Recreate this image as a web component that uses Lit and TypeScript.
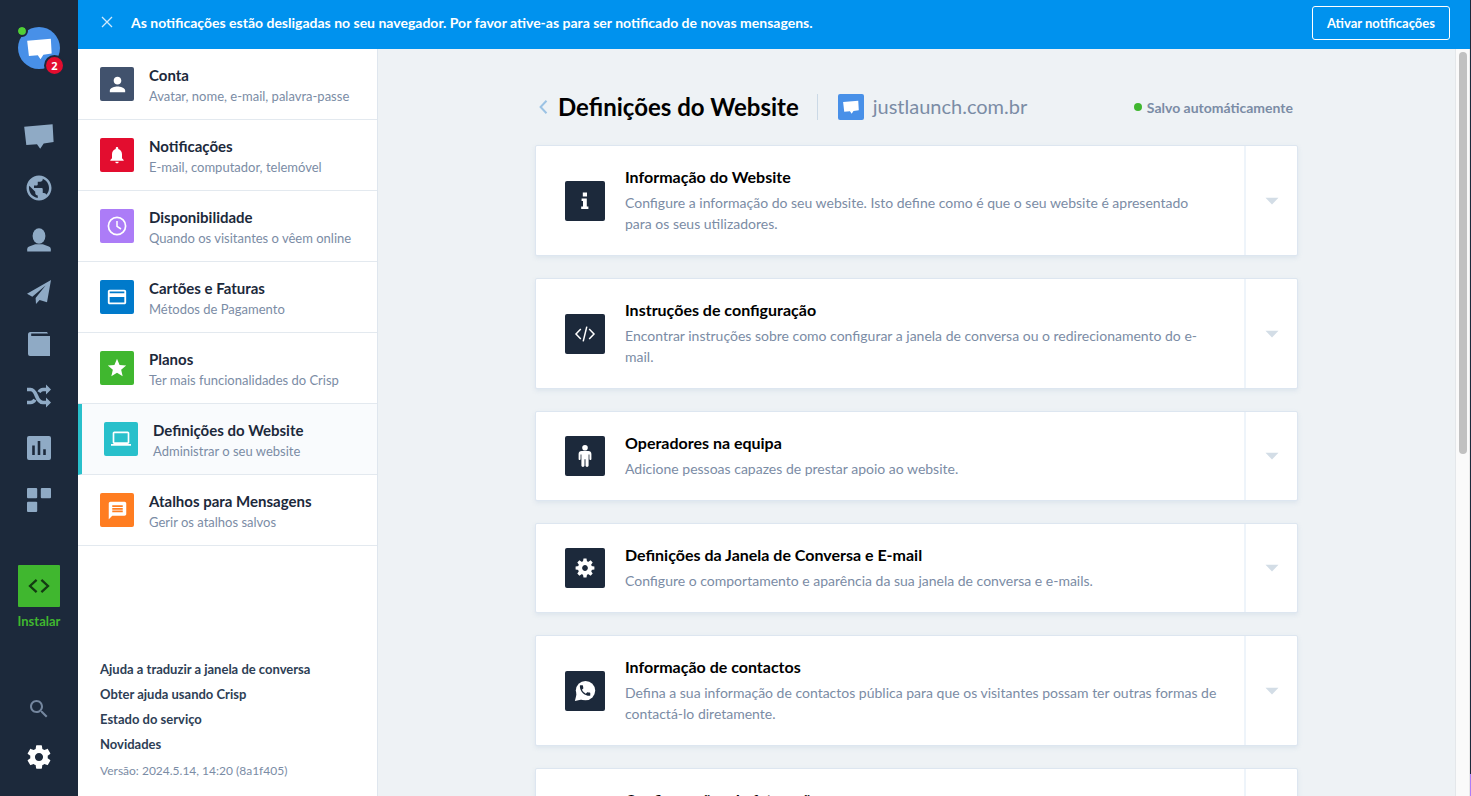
import { LitElement, html, css, svg } from "lit";
import { customElement } from "lit/decorators.js";
import { classMap } from "lit/directives/class-map.js";

const GEAR =
  "M19.43 12.98c.04-.32.07-.64.07-.98s-.03-.66-.07-.98l2.11-1.65c.19-.15.24-.42.12-.64l-2-3.46c-.12-.22-.39-.3-.61-.22l-2.49 1c-.52-.4-1.08-.73-1.69-.98l-.38-2.65C14.46 2.18 14.25 2 14 2h-4c-.25 0-.46.18-.49.42l-.38 2.65c-.61.25-1.17.59-1.69.98l-2.49-1c-.23-.09-.49 0-.61.22l-2 3.46c-.13.22-.07.49.12.64l2.11 1.65c-.04.32-.07.65-.07.98s.03.66.07.98l-2.11 1.65c-.19.15-.24.42-.12.64l2 3.46c.12.22.39.3.61.22l2.49-1c.52.4 1.08.73 1.69.98l.38 2.65c.03.24.24.42.49.42h4c.25 0 .46-.18.49-.42l.38-2.65c.61-.25 1.17-.59 1.69-.98l2.49 1c.23.09.49 0 .61-.22l2-3.46c.12-.22.07-.49-.12-.64l-2.11-1.65zM12 15.5c-1.93 0-3.5-1.57-3.5-3.5s1.57-3.5 3.5-3.5 3.5 1.57 3.5 3.5-1.57 3.5-3.5 3.5z";
const GLOBE =
  "M12 2C6.48 2 2 6.48 2 12s4.48 10 10 10 10-4.48 10-10S17.52 2 12 2zm-1 17.93c-3.95-.49-7-3.85-7-7.93 0-.62.08-1.21.21-1.79L9 15v1c0 1.1.9 2 2 2v1.93zm6.9-2.54c-.26-.81-1-1.39-1.9-1.39h-1v-3c0-.55-.45-1-1-1H8v-2h2c.55 0 1-.45 1-1V7h2c1.1 0 2-.9 2-2v-.41c2.93 1.19 5 4.06 5 7.41 0 2.08-.8 3.97-2.1 5.39z";
const PHONE =
  "M6.62 10.79c1.44 2.83 3.76 5.14 6.59 6.59l2.2-2.2c.27-.27.67-.36 1.02-.24 1.12.37 2.33.57 3.57.57.55 0 1 .45 1 1V20c0 .55-.45 1-1 1-9.39 0-17-7.61-17-17 0-.55.45-1 1-1h3.5c.55 0 1 .45 1 1 0 1.25.2 2.45.57 3.57.11.35.03.74-.25 1.02l-2.2 2.2z";

const icon = (size: number, viewBox: string, body: unknown) =>
  html`<svg width=${size} height=${size} viewBox=${viewBox} fill="currentColor" aria-hidden="true">${body}</svg>`;

const bubble = svg`<path d="M.2 5.700 28.600 3.200l1 17.900-9.900 1.300-3.500 5.400-3.200-4.600-10.700.9z"/>`;

const NAV = [
  { label: "Conversas", art: icon(30, "0 0 30 30", bubble) },
  { label: "Visitantes", art: icon(30, "0 0 24 24", svg`<path d=${GLOBE}/>`) },
  {
    label: "Contactos",
    art: icon(24, "0 0 24 24", svg`<ellipse cx="12" cy="8" rx="6.4" ry="7.8"/><path d="M.2 23.6v-2.4c0-1.6 1-2.4 2.6-3l5.4-2h7.6l5.4 2c1.600.6 2.600 1.400 2.600 3v2.400z"/>`),
  },
  {
    label: "Campanhas",
    art: icon(24, "0 0 24 24", svg`<path d="M24 0 0 13.800 5.300 16.700 18.600 5.400 8.600 18 9 24l3.600-4 7.400 2.200z"/>`),
  },
  {
    label: "Base de conhecimento",
    art: icon(24, "0 0 24 24", svg`<path d="M3.500 0H20l1 1.600H4.200V4H23v20H3a2 2 0 0 1-2-2V2.500A2.500 2.500 0 0 1 3.500 0z"/>`),
  },
  {
    label: "Automatizações",
    art: icon(
      24,
      "0 0 24 24",
      svg`<g fill="none" stroke="currentColor" stroke-width="3.600"><path d="M0 5.500h3.500c3 0 4.500 2.600 6 6.500s3.500 6.500 6.500 6.500h4"/><path d="M0 18.500h3.500c2 0 3.400-1.100 4.400-2.900M12 8.200c1-1.700 2.200-2.700 4-2.700h4"/></g><path d="m19 .6 5 4.900-5 4.900zM19 13.600l5 4.900-5 4.900z"/>`
    ),
  },
  {
    label: "Estatísticas",
    art: icon(
      24,
      "0 0 24 24",
      svg`<path fill-rule="evenodd" d="M2 0h20a2 2 0 0 1 2 2v20a2 2 0 0 1-2 2H2a2 2 0 0 1-2-2V2a2 2 0 0 1 2-2zM5.200 9.500V19h2.600V9.500zM10.700 5v14h2.600V5zM16.200 13.200V19h2.600v-5.800z"/>`
    ),
  },
  {
    label: "Plugins",
    art: icon(24, "0 0 24 24", svg`<rect width="10.200" height="10.200" rx="1"/><rect x="13.800" width="10.200" height="10.200" rx="1"/><rect y="13.800" width="10.200" height="10.200" rx="1"/>`),
  },
];

const MENU = [
  {
    title: "Conta",
    text: "Avatar, nome, e-mail, palavra-passe",
    tone: "slate",
    art: icon(23, "0 0 24 24", svg`<path d="M12 12c2.210 0 4-1.790 4-4s-1.790-4-4-4-4 1.790-4 4 1.790 4 4 4zm0 2c-2.670 0-8 1.340-8 4v2h16v-2c0-2.660-5.330-4-8-4z"/>`),
  },
  {
    title: "Notificações",
    text: "E-mail, computador, telemóvel",
    tone: "red",
    art: icon(20, "0 0 24 24", svg`<path d="M12 22c1.100 0 2-.9 2-2h-4c0 1.100.89 2 2 2zm6-6v-5c0-3.070-1.640-5.640-4.500-6.320V4c0-.83-.67-1.500-1.500-1.500s-1.500.67-1.500 1.500v.68C7.630 5.360 6 7.920 6 11v5l-2 2v1h16v-1l-2-2z"/>`),
  },
  {
    title: "Disponibilidade",
    text: "Quando os visitantes o vêem online",
    tone: "purple",
    art: icon(20, "0 0 20 20", svg`<g fill="none" stroke="currentColor"><circle cx="10" cy="10" r="8.600" stroke-width="1.700"/><path d="M10 5v5.400l4 2.600" stroke-width="1.500"/></g>`),
  },
  {
    title: "Cartões e Faturas",
    text: "Métodos de Pagamento",
    tone: "blue",
    art: icon(22, "0 0 24 24", svg`<path d="M20 4H4c-1.110 0-1.990.89-1.990 2L2 18c0 1.110.89 2 2 2h16c1.110 0 2-.89 2-2V6c0-1.110-.89-2-2-2zm0 14H4v-6h16v6zm0-10H4V6h16v2z"/>`),
  },
  {
    title: "Planos",
    text: "Ter mais funcionalidades do Crisp",
    tone: "green",
    art: icon(22, "0 0 24 24", svg`<path d="M12 17.270 18.180 21l-1.640-7.030L22 9.240l-7.190-.61L12 2 9.190 8.630 2 9.240l5.460 4.730L5.820 21z"/>`),
  },
  {
    title: "Definições do Website",
    text: "Administrar o seu website",
    tone: "teal",
    active: true,
    art: icon(20, "0 0 24 24", svg`<path d="M20 18c1.100 0 1.990-.9 1.990-2L22 5c0-1.100-.9-2-2-2H4c-1.100 0-2 .9-2 2v11c0 1.100.9 2 2 2H0v2h24v-2h-4zM4 5h16v11H4V5z"/>`),
  },
  {
    title: "Atalhos para Mensagens",
    text: "Gerir os atalhos salvos",
    tone: "orange",
    art: icon(21, "0 0 24 24", svg`<path d="M20 2H4c-1.100 0-1.990.9-1.990 2L2 22l4-4h14c1.100 0 2-.9 2-2V4c0-1.100-.9-2-2-2zm-2 12H6v-2h12v2zm0-3H6V9h12v2zm0-3H6V6h12v2z"/>`),
  },
];

const LINKS = ["Ajuda a traduzir a janela de conversa", "Obter ajuda usando Crisp", "Estado do serviço", "Novidades"];

const SECTIONS = [
  {
    title: "Informação do Website",
    text: "Configure a informação do seu website. Isto define como é que o seu website é apresentado para os seus utilizadores.",
    art: icon(18, "0 0 18 18", svg`<path d="M6.800.6h4.200v3.800H6.800zM5.600 6.400h5.200v8h1.600V17H5.200v-2.600h1.800V9H5.600z"/>`),
  },
  {
    title: "Instruções de configuração",
    text: "Encontrar instruções sobre como configurar a janela de conversa ou o redirecionamento do e-mail.",
    art: icon(22, "0 0 22 22", svg`<path d="M6.800 6 2 11l4.800 5M15.200 6l4.800 5-4.800 5M12.800 3.600 9.200 18.400" fill="none" stroke="currentColor" stroke-width="1.500"/>`),
  },
  {
    title: "Operadores na equipa",
    text: "Adicione pessoas capazes de prestar apoio ao website.",
    art: icon(22, "0 0 22 22", svg`<circle cx="11" cy="2.800" r="2.800"/><path d="M7.500 6h7c1.700 0 2.900 1.200 2.900 2.900V14c0 1.300-2 1.300-2 0V9.600h-.8v11c0 1.700-3.100 1.700-3.100 0v-6.400h-1v6.400c0 1.700-3.100 1.700-3.100 0v-11h-.8V14c0 1.300-2 1.300-2 0V8.900C4.600 7.200 5.800 6 7.500 6z"/>`),
  },
  {
    title: "Definições da Janela de Conversa e E-mail",
    text: "Configure o comportamento e aparência da sua janela de conversa e e-mails.",
    art: icon(
      20,
      "-10 -10 20 20",
      svg`<circle r="5" fill="none" stroke="currentColor" stroke-width="4.200"/>${[0, 45, 90, 135].map(
        (a) => svg`<path transform="rotate(${a})" d="M-2.100-6 -1.500-9.400h3L2.100-6zM-2.100 6-1.500 9.400h3L2.100 6z"/>`
      )}`
    ),
  },
  {
    title: "Informação de contactos",
    text: "Defina a sua informação de contactos pública para que os visitantes possam ter outras formas de contactá-lo diretamente.",
    art: icon(
      22,
      "0 0 22 22",
      svg`<circle cx="11.500" cy="10.600" r="9.700"/><path d="M2.800 13 .9 20.900l8-1.600z"/><path class="cut" transform="translate(4.100 3.600) scale(.58)" d=${PHONE}/>`
    ),
  },
  {
    title: "Configurações de faturação",
    text: "Configure a informação de faturação do seu website. Estes dados são usados nas faturas que são enviadas todos os meses por e-mail.",
    art: icon(22, "0 0 24 24", svg`<path d="M20 4H4v16h16zM18 18H6v-6h12z"/>`),
  },
];

@customElement("app-root")
export class AppRoot extends LitElement {
  static styles = css`
    :host {
      display: flex;
      height: 100vh;
      overflow: hidden;
      background: #eef2f5;
      color: #1c293b;
      font-family: Lato, "Open Sans", sans-serif;
      font-size: 14px;
    }
    * {
      box-sizing: border-box;
    }
    a {
      color: inherit;
      text-decoration: none;
    }
    button {
      font: inherit;
      color: inherit;
      background: none;
      border: 0;
      padding: 0;
      cursor: pointer;
    }
    svg {
      display: block;
    }
    h1, h2, p, ul {
      margin: 0;
      padding: 0;
      list-style: none;
    }
    .rail {
      flex: none;
      width: 78px;
      padding: 27px 0 15px;
      display: flex;
      flex-direction: column;
      align-items: center;
      background: #1c293b;
      color: #8faac5;
    }
    .avatar {
      position: relative;
      flex: none;
      width: 42px;
      height: 42px;
      border-radius: 50%;
      background: #4890e8;
      color: #fff;
      display: grid;
      place-items: center;
    }
    .online {
      position: absolute;
      left: -2px;
      top: -2px;
      width: 12px;
      height: 12px;
      border-radius: 50%;
      border: 2px solid #1c293b;
      background: #50cf36;
      background-clip: padding-box;
    }
    .count {
      position: absolute;
      right: -5px;
      bottom: -7px;
      width: 21px;
      height: 21px;
      border-radius: 50%;
      border: 2px solid #1c293b;
      background: #e30d2f;
      font: 700 11px/17px "Open Sans", sans-serif;
      text-align: center;
    }
    .apps {
      margin-top: 41px;
    }
    .app {
      width: 78px;
      height: 52px;
      display: grid;
      place-items: center;
    }
    .install {
      margin-top: 39px;
      display: flex;
      flex-direction: column;
      align-items: center;
      gap: 5px;
      color: #40b72f;
      font-size: 13px;
      font-weight: 700;
      line-height: 18px;
    }
    .install-box {
      width: 42px;
      height: 42px;
      border-radius: 1px;
      background: #40b72f;
      color: #133c12;
      display: grid;
      place-items: center;
    }
    .tools {
      margin-top: auto;
    }
    .tool {
      width: 78px;
      height: 48px;
      display: grid;
      place-items: center;
      color: #74869e;
    }
    .tool.active {
      color: #fff;
    }
    .page {
      flex: 1;
      min-width: 0;
      display: flex;
      flex-direction: column;
    }
    .banner {
      flex: none;
      height: 49px;
      padding: 0 20px 0 22px;
      display: flex;
      align-items: center;
      gap: 17px;
      background: #0092ee;
      color: #fff;
      font-weight: 700;
    }
    .close,
    .banner-text {
      padding-bottom: 5px;
    }
    .close {
      width: 14px;
      display: grid;
      place-items: center;
    }
    .banner-text {
      flex: 1;
    }
    .enable {
      height: 34px;
      margin-bottom: 3px;
      padding: 0 14px;
      border: 1px solid #fff;
      border-radius: 3px;
      font-size: 13px;
      font-weight: 700;
    }
    .body {
      flex: 1;
      min-height: 0;
      display: flex;
    }
    .side {
      flex: none;
      width: 300px;
      display: flex;
      flex-direction: column;
      background: #fff;
      border-right: 1px solid #dfe6ee;
    }
    .entry {
      display: flex;
      gap: 15px;
      height: 71px;
      padding: 18px 22px 0;
      border-bottom: 1px solid #e3e9ef;
    }
    .entry.active {
      border-left: 4px solid #29c0cb;
      background: #f9fbfd;
    }
    .tile {
      flex: none;
      width: 34px;
      height: 34px;
      border-radius: 2px;
      color: #fff;
      display: grid;
      place-items: center;
    }
    .slate { background: #41526d; }
    .red { background: #e30d2f; }
    .purple { background: #ac7cf7; }
    .blue { background: #007acb; }
    .green { background: #40b72f; }
    .teal { background: #29c0cb; }
    .orange { background: #ff7d21; }
    .entry-title,
    .entry-text {
      display: block;
      line-height: 16px;
      white-space: nowrap;
    }
    .entry-title {
      font-size: 15px;
      font-weight: 700;
      margin-bottom: 5px;
    }
    .entry-text {
      font-size: 13px;
      color: #7b8ca5;
    }
    .foot {
      margin-top: auto;
      padding: 0 22px 13px;
      font-size: 13px;
      line-height: 25px;
    }
    .foot-link {
      display: block;
      font-weight: 700;
      color: #2d3e55;
    }
    .version {
      margin-top: 1px;
      font-size: 12px;
      color: #7b8ca5;
    }
    .main {
      flex: 1;
      min-width: 0;
      overflow: hidden;
      padding: 45px 20px 0;
    }
    .content {
      max-width: 763px;
      margin: 0 auto;
    }
    .head {
      display: flex;
      align-items: center;
      height: 26px;
      margin-bottom: 25px;
      padding: 0 5px 0 4px;
    }
    .back {
      color: #9cc3e4;
      margin-right: 5px;
    }
    .title {
      font-size: 24px;
      font-weight: 700;
      line-height: 26px;
      color: #000;
      padding-right: 18px;
      margin-right: 20px;
      border-right: 1px solid #cbd9e6;
    }
    .site-logo {
      width: 26px;
      height: 26px;
      border-radius: 2px;
      background: #4890e8;
      color: #fff;
      display: grid;
      place-items: center;
      margin-right: 9px;
    }
    .domain {
      font-size: 20px;
      line-height: 24px;
      padding-bottom: 2px;
      color: #7b8ca5;
    }
    .saved {
      margin-left: auto;
      display: flex;
      align-items: center;
      gap: 5px;
      color: #7b8ca5;
      font-weight: 700;
    }
    .dot {
      width: 8px;
      height: 8px;
      border-radius: 50%;
      background: #40b72f;
    }
    .cards {
      display: flex;
      flex-direction: column;
      gap: 22px;
    }
    .card {
      display: flex;
      align-items: center;
      background: #fff;
      border: 1px solid #dde6f0;
      border-radius: 2px;
      box-shadow: 0 2px 4px rgba(180, 198, 220, 0.3);
      padding-left: 29px;
    }
    .card-icon {
      flex: none;
      width: 40px;
      height: 40px;
      border-radius: 2px;
      background: #1c293b;
      color: #fff;
      display: grid;
      place-items: center;
    }
    .cut {
      fill: #1c293b;
    }
    .card-body {
      flex: 1;
      min-width: 0;
      padding: 20px 26px 21px 20px;
    }
    .card-title {
      font-size: 16px;
      font-weight: 700;
      line-height: 22px;
      margin-bottom: 4px;
      color: #000;
    }
    .card-text {
      line-height: 21px;
      color: #7b8ca5;
    }
    .expand {
      flex: none;
      align-self: stretch;
      width: 53px;
      border-left: 2px solid #eef4fa;
      display: grid;
      place-items: center;
      color: #d3dde6;
    }
    .track {
      flex: none;
      width: 15px;
      padding: 3px 3px 0;
      background: #fafafa;
      border-left: 1px solid #e4e7ea;
      border-right: 1px solid #e9e9e9;
    }
    .thumb {
      width: 8px;
      height: 54%;
      border-radius: 4px;
      background: #c1c1c1;
    }
    .edge {
      flex: none;
      width: 1px;
      display: flex;
      flex-direction: column;
      background: #1c293b;
    }
    .edge-accent {
      margin-top: auto;
      height: 22px;
      background: #ac7cf7;
    }
  `;

  render() {
    return html`
      <nav class="rail" aria-label="Principal">
        <a class="avatar" href="#" aria-label="justlaunch.com.br">
          ${icon(25, "0 0 30 30", bubble)}
          <span class="online"></span>
          <span class="count">2</span>
        </a>
        <ul class="apps">
          ${NAV.map((n) => html`<li><a class="app" href="#" aria-label=${n.label}>${n.art}</a></li>`)}
        </ul>
        <a class="install" href="#">
          <span class="install-box">
            ${icon(22, "0 0 22 22", svg`<path d="M8.600 4.800 2 11l6.600 6.200M13.400 4.800 20 11l-6.600 6.200" fill="none" stroke="currentColor" stroke-width="2.300"/>`)}
          </span>
          Instalar
        </a>
        <div class="tools">
          <a class="tool" href="#" aria-label="Pesquisar">
            ${icon(24, "0 0 24 24", svg`<path d="M15.500 14h-.79l-.28-.27C15.410 12.590 16 11.110 16 9.500 16 5.910 13.090 3 9.500 3S3 5.910 3 9.500 5.910 16 9.500 16c1.610 0 3.090-.59 4.230-1.570l.27.28v.79l5 4.990L20.490 19l-4.990-5zm-6 0C7.010 14 5 11.990 5 9.500S7.010 5 9.500 5 14 7.010 14 9.500 11.990 14 9.500 14z"/>`)}
          </a>
          <a class="tool active" href="#" aria-label="Definições">${icon(28, "0 0 24 24", svg`<path d=${GEAR}/>`)}</a>
        </div>
      </nav>
      <div class="page">
        <div class="banner" role="status">
          <button class="close" aria-label="Fechar">
            ${icon(12, "0 0 12 12", svg`<path d="m1 1 10 10M11 1 1 11" fill="none" stroke="#cfe9fc" stroke-width="1.300"/>`)}
          </button>
          <span class="banner-text">As notificações estão desligadas no seu navegador. Por favor ative-as para ser notificado de novas mensagens.</span>
          <button class="enable">Ativar notificações</button>
        </div>
        <div class="body">
          <aside class="side">
            <nav aria-label="Definições">
              ${MENU.map(
                (m) => html`<a class=${classMap({ entry: true, active: !!m.active })} href="#">
                  <span class="tile ${m.tone}">${m.art}</span>
                  <span>
                    <span class="entry-title">${m.title}</span>
                    <span class="entry-text">${m.text}</span>
                  </span>
                </a>`
              )}
            </nav>
            <div class="foot">
              ${LINKS.map((l) => html`<a class="foot-link" href="#">${l}</a>`)}
              <p class="version">Versão: 2024.5.14, 14:20 (8a1f405)</p>
            </div>
          </aside>
          <main class="main">
            <div class="content">
              <header class="head">
                <button class="back" aria-label="Voltar">
                  ${icon(14, "0 0 14 14", svg`<path d="M7.500.8 1.600 7l5.900 6.200" fill="none" stroke="currentColor" stroke-width="2"/>`)}
                </button>
                <h1 class="title">Definições do Website</h1>
                <span class="site-logo">${icon(16, "0 0 30 30", bubble)}</span>
                <span class="domain">justlaunch.com.br</span>
                <span class="saved"><span class="dot"></span>Salvo automáticamente</span>
              </header>
              <div class="cards">
                ${SECTIONS.map(
                  (s) => html`<section class="card">
                    <span class="card-icon">${s.art}</span>
                    <div class="card-body">
                      <h2 class="card-title">${s.title}</h2>
                      <p class="card-text">${s.text}</p>
                    </div>
                    <button class="expand" aria-label="Abrir ${s.title}">
                      ${icon(14, "0 0 14 14", svg`<path d="M.5 3.800h13L7 10.600z"/>`)}
                    </button>
                  </section>`
                )}
              </div>
            </div>
          </main>
          <div class="track"><div class="thumb"></div></div>
        </div>
      </div>
      <div class="edge"><div class="edge-accent"></div></div>
    `;
  }
}
